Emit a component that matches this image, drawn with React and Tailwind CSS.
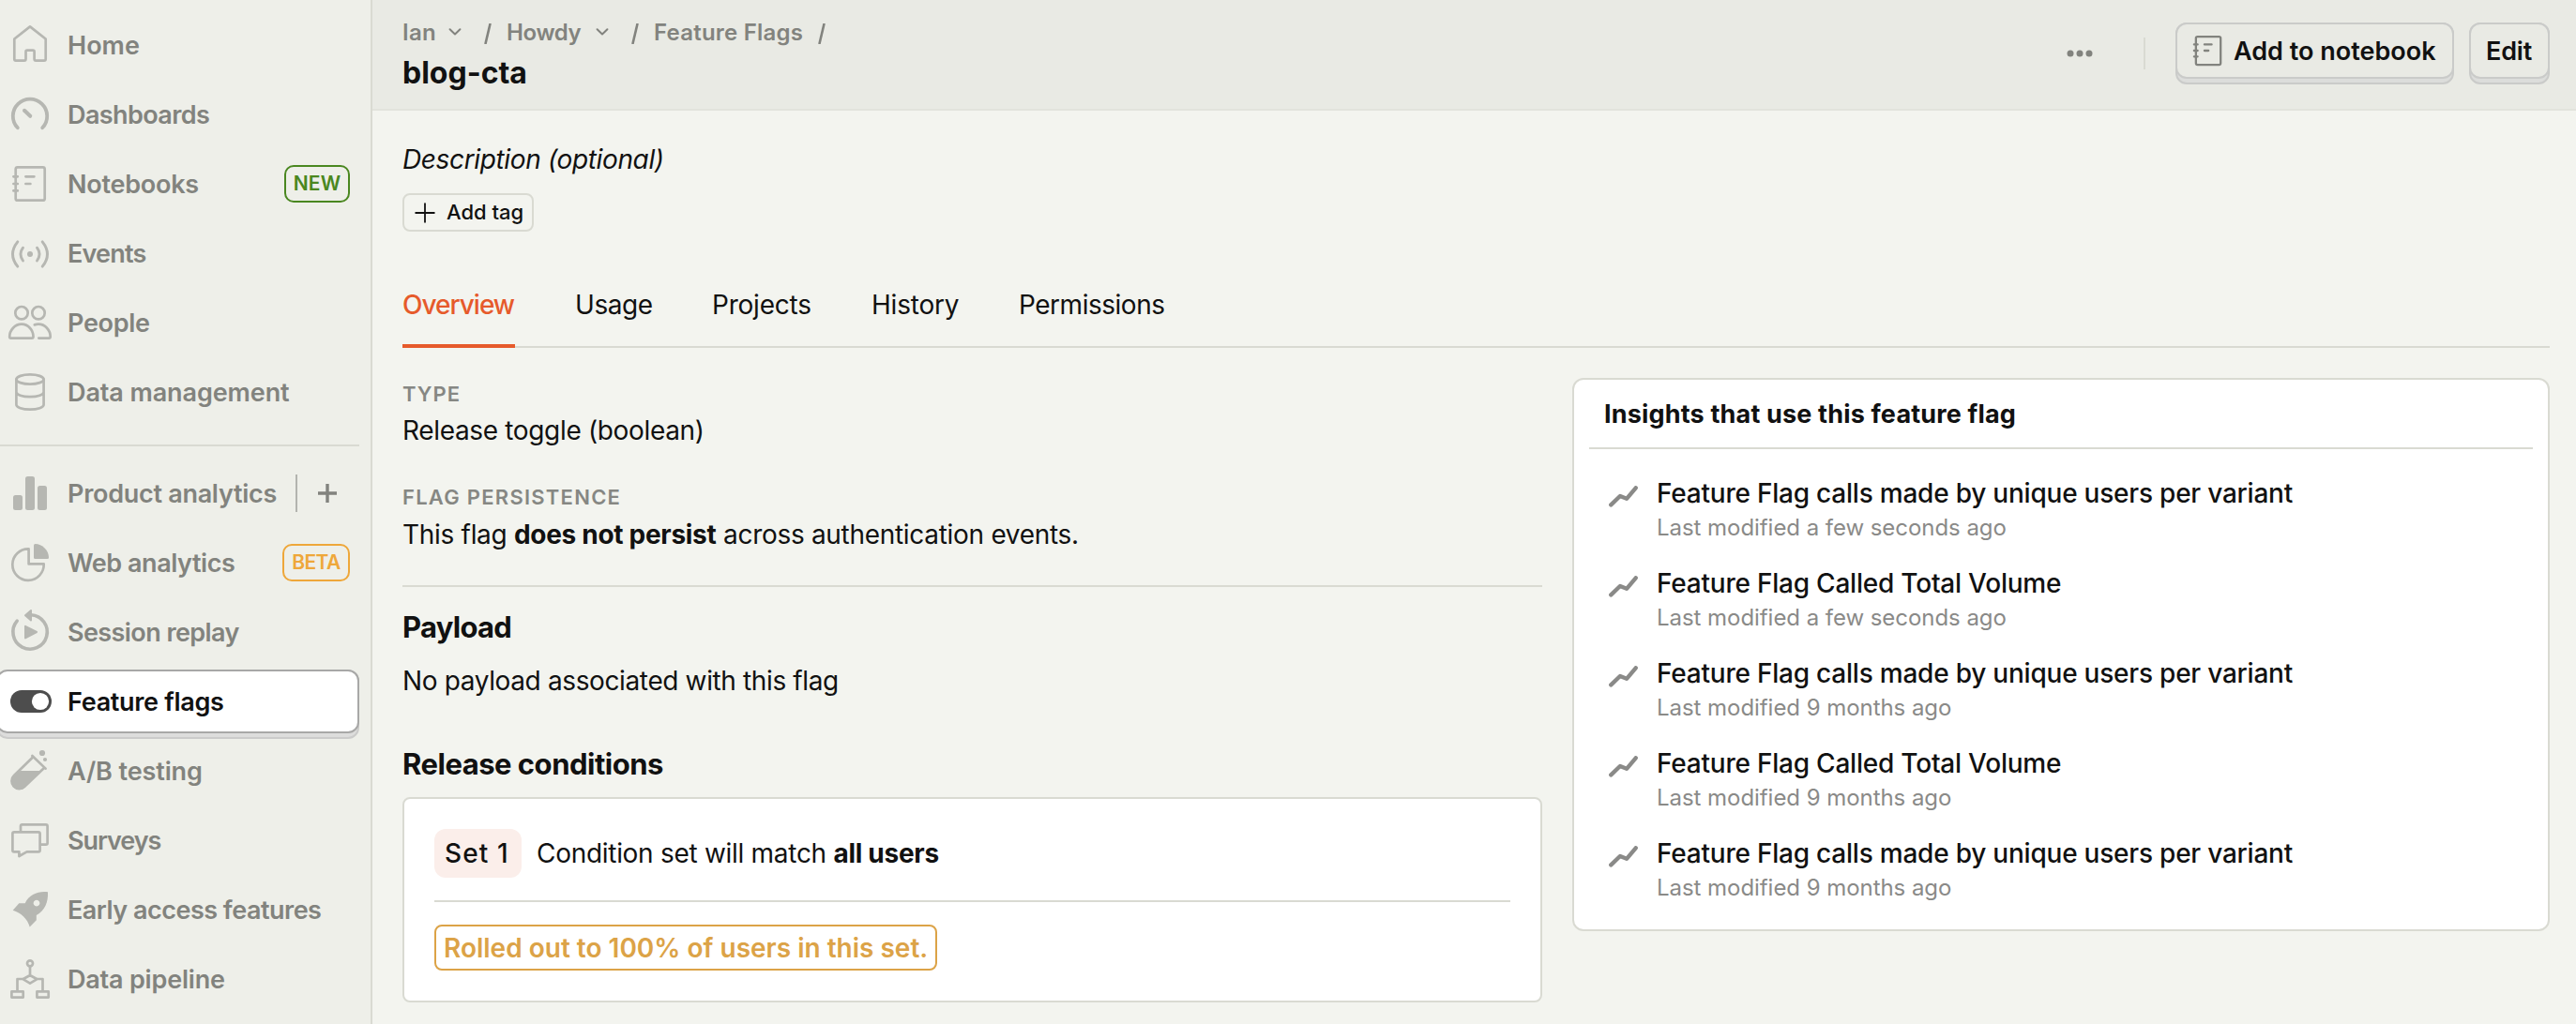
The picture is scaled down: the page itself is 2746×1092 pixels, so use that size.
const line = {
  fill: 'none',
  stroke: 'currentColor',
  strokeWidth: 2.7,
  strokeLinecap: 'round',
  strokeLinejoin: 'round',
}

const icons = {
  home: (
    <path
      {...line}
      d="M32 14.4 L48.7 27.5 V49 q0 1.7-1.7 1.7 H38.3 q-1.7 0-1.7-1.7 V41.2 q0-1.5-1.5-1.5 H29 q-1.5 0-1.5 1.5 V49 q0 1.7-1.7 1.7 H17 q-1.7 0-1.7-1.7 V27.5 Z"
    />
  ),
  dashboards: (
    <g {...line}>
      <path strokeWidth="3.8" d="M18.8 48.3 A18.2 18.2 0 1 1 45.2 48.3" />
      <path strokeWidth="4" d="M26 29.8 L32.2 35.8" />
    </g>
  ),
  notebook: (
    <g {...line}>
      <rect x="16.7" y="16.4" width="31" height="35.3" rx="2" />
      <path d="M14.4 26.3 H18.8 M14.4 34 H18.8 M14.4 41.4 H18.8 M27.4 26.3 H36.4 M27.4 34 H32.4" />
    </g>
  ),
  events: (
    <g {...line} strokeWidth="2.9">
      <path d="M18.8 21.8 Q8.2 35 18.8 48.2 M45.2 21.8 Q55.8 35 45.2 48.2 M24.5 28.2 Q19.4 35 24.5 42 M39.5 28.2 Q44.6 35 39.5 42" />
      <circle cx="32" cy="35" r="3" fill="currentColor" stroke="none" />
    </g>
  ),
  people: (
    <g {...line}>
      <circle cx="23" cy="23.7" r="6.7" />
      <circle cx="41" cy="23.7" r="6.7" />
      <path d="M11.5 50.6 H34 q1.5 0 1.5-1.5 C35.5 42 30 35.7 23 35.7 S10.2 42 10.2 49.1 q0 1.5 1.3 1.5 Z" />
      <path d="M36.8 36.4 C38 36 39.5 35.7 41 35.7 C48 35.7 53.7 42 53.7 49.1 q0 1.5-1.5 1.5 H41.3" />
    </g>
  ),
  database: (
    <g {...line}>
      <ellipse cx="32" cy="20.5" rx="14.6" ry="5.1" />
      <path d="M17.4 20.5 V47.5 c0 3 6.5 5.1 14.6 5.1 s14.6-2.1 14.6-5.1 V20.5 M17.4 34 c0 3 6.5 5.1 14.6 5.1 s14.6-2.1 14.6-5.1" />
    </g>
  ),
  bars: (
    <g fill="currentColor">
      <rect x="14" y="36" width="10" height="16" rx="2.5" />
      <rect x="27" y="16" width="10" height="36" rx="2.5" />
      <rect x="40" y="26" width="10" height="26" rx="2.5" />
    </g>
  ),
  pie: (
    <g>
      <path {...line} d="M30.6 19.4 V35.4 H46.7 A16.7 16.7 0 1 1 30.6 19.4 Z" />
      <path
        fill="currentColor"
        d="M37.5 14 C45 14 52 21 52 28.5 q0 1.5-1.5 1.5 H37.5 q-1.5 0-1.5-1.5 V15.5 q0-1.5 1.5-1.5 Z"
      />
    </g>
  ),
  replay: (
    <g>
      <path {...line} strokeWidth="3.6" d="M33 15.8 A18.2 18.2 0 1 1 18.2 22.2" />
      <path {...line} strokeWidth="2" fill="currentColor" d="M27 16.2 L33 11 V21.4 Z" />
      <path {...line} strokeWidth="2" fill="currentColor" d="M27 27.8 L39 34 L27 40.4 Z" />
    </g>
  ),
  toggle: (
    <g>
      <rect x="11" y="22" width="44" height="24" rx="12" fill="#4d4d4d" />
      <circle cx="43" cy="34" r="9.1" fill="#fff" />
    </g>
  ),
  flask: (
    <g>
      <path
        {...line}
        strokeLinecap="butt"
        d="M35.5 19 L15 39 A7.4 7.4 0 0 0 26.2 50.8 L47 31"
      />
      <path {...line} d="M34.4 18 L48.6 31.6" />
      <path fill="currentColor" d="M21.5 34 H43.5 L27 51.4 A8.7 8.7 0 0 1 14.4 39.4 Z" />
      <circle cx="45" cy="15" r="3.1" fill="currentColor" />
      <circle cx="48" cy="22" r="2.1" fill="currentColor" />
    </g>
  ),
  surveys: (
    <path
      {...line}
      d="M15 25.4 H41 q1.6 0 1.6 1.6 V44.8 q0 1.6-1.6 1.6 H28.6 L20.4 51 V46.4 H15 q-1.6 0-1.6-1.6 V27 q0-1.6 1.6-1.6 Z M22 24.5 V19 q0-1.6 1.6-1.6 H49 q1.6 0 1.6 1.6 V37 q0 1.6-1.6 1.6 H43.5"
    />
  ),
  rocket: (
    <path
      fill="currentColor"
      fillRule="evenodd"
      d="M51 15.2 C41 14 31 17.5 26.7 27.3 H20.3 L13.7 34.7 C22.5 37.5 29.5 44 31.7 52.4 L38.8 45.3 V40 C48 35 51.5 26 51 15.2 Z M39 23.7 a3.4 3.4 0 1 0 0.01 0 Z"
    />
  ),
  pipeline: (
    <g {...line}>
      <circle cx="32" cy="17.3" r="3" />
      <path d="M32 21 V29.5 M32 30 L39.5 34.2 L32 38.6 L24.5 34.2 Z M24 34 H18.5 V46.5 M40 34 H45.5 V46.5" />
      <path d="M12.4 47.4 H24.7 V53.6 H12.4 Z M39.4 47.4 H51.7 V53.6 H39.4 Z" />
    </g>
  ),
}

const primary = [
  { icon: 'home', label: 'Home', tracking: '' },
  { icon: 'dashboards', label: 'Dashboards', tracking: 'tracking-[-0.6px]' },
  { icon: 'notebook', label: 'Notebooks', tracking: 'tracking-[-0.25px]', badge: 'NEW' },
  { icon: 'events', label: 'Events', tracking: 'tracking-[-0.8px]' },
  { icon: 'people', label: 'People', tracking: 'tracking-[-0.3px]' },
  { icon: 'database', label: 'Data management', tracking: 'tracking-[-0.1px]' },
]

const products = [
  { icon: 'bars', label: 'Product analytics', tracking: 'tracking-[-0.28px]', add: true },
  { icon: 'pie', label: 'Web analytics', tracking: 'tracking-[-0.44px]', badge: 'BETA' },
  { icon: 'replay', label: 'Session replay', tracking: 'tracking-[-0.58px]' },
  { icon: 'toggle', label: 'Feature flags', tracking: 'tracking-[-0.3px]', active: true },
  { icon: 'flask', label: 'A/B testing', tracking: 'tracking-[-0.1px]' },
  { icon: 'surveys', label: 'Surveys', tracking: 'tracking-[-1.07px]' },
  { icon: 'rocket', label: 'Early access features', tracking: 'tracking-[-0.5px]' },
  { icon: 'pipeline', label: 'Data pipeline', tracking: 'tracking-[-0.2px]' },
]

function NavIcon({ name }) {
  return (
    <svg width="64" height="68" viewBox="0 0 64 68" className="shrink-0 text-[#b6b7b2]">
      {icons[name]}
    </svg>
  )
}

function Badge({ kind }) {
  return kind === 'NEW' ? (
    <span className="mr-[10px] flex h-10 w-[70px] items-center justify-center rounded-[10px] border-2 border-[#4a8720] text-[21px] font-semibold tracking-[0.1px] text-[#4a8720]">
      NEW
    </span>
  ) : (
    <span className="mr-[10px] flex h-10 w-[72px] items-center justify-center rounded-[10px] border-2 border-[#eea73a] text-[21px] font-semibold tracking-[-0.6px] text-[#eea73a]">
      BETA
    </span>
  )
}

function NavItem({ item }) {
  if (item.active) {
    return (
      <a className="relative z-10 -mb-[6px] -ml-1 flex h-[74px] rounded-xl border-2 border-[#cbcbca] bg-[#dddddc]">
        <span className="-mx-[2px] -mt-[2px] flex h-[68px] flex-1 items-center rounded-xl border-2 border-[#a8a8a7] bg-white pl-[2px]">
          <NavIcon name={item.icon} />
          <span className={`pl-2 pt-[2px] text-[#111] ${item.tracking}`}>{item.label}</span>
        </span>
      </a>
    )
  }
  return (
    <a className="flex h-[68px] items-center">
      <NavIcon name={item.icon} />
      <span className={`flex-1 whitespace-nowrap pl-2 pt-[2px] ${item.tracking}`}>{item.label}</span>
      {item.badge && <Badge kind={item.badge} />}
      {item.add && (
        <span className="mr-6 flex items-center gap-[22px]">
          <span className="h-10 w-[2px] bg-[#b3b4af]" />
          <svg width="20" height="20" viewBox="0 0 20 20" stroke="currentColor" strokeWidth="3.4">
            <path d="M10 0 V20 M0 10 H20" />
          </svg>
        </span>
      )}
    </a>
  )
}

function Sidebar() {
  return (
    <nav className="flex w-[397px] shrink-0 flex-col border-r-2 border-[#d9dad2] bg-[#eeefe9] pr-3 pt-[14px] text-[27px] font-semibold text-[#82837e]">
      <div className="flex flex-col gap-[6px]">
        {primary.map((item) => (
          <NavItem key={item.label} item={item} />
        ))}
      </div>
      <div className="mb-4 mt-[22px] h-[2px] shrink-0 bg-[#d9dad2]" />
      <div className="flex flex-col gap-[6px]">
        {products.map((item) => (
          <NavItem key={item.label} item={item} />
        ))}
      </div>
    </nav>
  )
}

function Chevron({ className }) {
  return (
    <svg width="14" height="8" viewBox="0 0 14 8" className={className} fill="none" stroke="currentColor" strokeWidth="2" strokeLinecap="round" strokeLinejoin="round">
      <path d="M1.6 1.3 L7 6.5 L12.4 1.3" />
    </svg>
  )
}

function Slash({ className }) {
  return (
    <svg width="8" height="22" viewBox="0 0 8 22" className={className} fill="none" stroke="currentColor" strokeWidth="2.6">
      <path d="M6.6 0 L1.4 22" />
    </svg>
  )
}

function RaisedButton({ className, children }) {
  return (
    <button className={`h-[66px] rounded-xl border-2 border-[#cacbc9] bg-[#dcdddb] ${className}`}>
      <span className="-mx-[2px] -mt-[6px] flex h-[60px] items-center rounded-xl border-2 border-[#cacbc9] bg-[#e9eae4] text-[27px] font-semibold text-[#111]">
        {children}
      </span>
    </button>
  )
}

function Header() {
  return (
    <header className="flex h-[118px] shrink-0 items-start justify-between border-b-2 border-[#e2e3dc] bg-[#e9eae4] pl-8 pr-7">
      <div className="pt-[18px]">
        <div className="flex h-8 items-center text-[24px] font-semibold leading-8 text-[#82837e]">
          <span className="w-[35px] pt-[2px] tracking-[0.3px]">Ian</span>
          <Chevron className="ml-[14px]" />
          <Slash className="ml-6 mt-1" />
          <span className="ml-4 w-[81px] pt-[2px] tracking-[-0.38px]">Howdy</span>
          <Chevron className="ml-[14px]" />
          <Slash className="ml-6 mt-1" />
          <span className="ml-4 w-[160px] whitespace-nowrap pt-[2px] tracking-[0.22px]">Feature Flags</span>
          <Slash className="ml-[15px] mt-1" />
        </div>
        <h1 className="mt-2 text-[32px] font-bold leading-10 text-[#111]">blog-cta</h1>
      </div>
      <div className="flex pt-6">
        <svg width="28" height="8" viewBox="0 0 28 8" className="mt-[29px] text-[#82837e]" fill="currentColor">
          <circle cx="4" cy="4" r="3.5" />
          <circle cx="14" cy="4" r="3.5" />
          <circle cx="24" cy="4" r="3.5" />
        </svg>
        <span className="ml-[54px] mr-8 mt-4 h-[34px] w-[2px] bg-[#d9dad2]" />
        <RaisedButton className="mr-4 w-[297px]">
          <svg width="36" height="40" viewBox="13 14 36 40" className="ml-[14px] shrink-0 text-[#82837e]">
            <g transform="translate(31 34) scale(0.85) translate(-31 -34)">{icons.notebook}</g>
          </svg>
          <span className="ml-[10px] whitespace-nowrap pt-[2px]">Add to notebook</span>
        </RaisedButton>
        <RaisedButton className="w-[86px]">
          <span className="pl-4 pt-[2px] tracking-[-0.2px]">Edit</span>
        </RaisedButton>
      </div>
    </header>
  )
}

function Tabs() {
  return (
    <div className="mt-[58px] flex h-[66px] items-start gap-16 border-b-2 border-[#d9dad2] text-[28px] leading-10">
      <span className="h-[66px] w-[120px] border-b-4 border-[#e65a2b] font-medium tracking-[-1px] text-[#e65a2b]">
        Overview
      </span>
      <span className="w-[83px] tracking-[-0.43px]">Usage</span>
      <span className="-ml-[1px] w-[106px] tracking-[-0.21px]">Projects</span>
      <span className="w-[93px] tracking-[-0.22px]">History</span>
      <span className="tracking-[-0.48px]">Permissions</span>
    </div>
  )
}

function Details() {
  return (
    <div className="flex w-[1215px] shrink-0 flex-col pt-[1px] text-[28px] leading-10">
      <div className="text-[22px] font-semibold leading-8 tracking-[1px] text-[#868783]">TYPE</div>
      <div className="mt-[3px] tracking-[-0.34px]">Release toggle (boolean)</div>
      <div className="mt-[35px] text-[22px] font-semibold leading-8 tracking-[1.25px] text-[#868783]">
        FLAG PERSISTENCE
      </div>
      <div className="mt-1 tracking-[-0.3px]">
        This flag <b>does not persist</b> across authentication events.
      </div>
      <div className="mt-[34px] h-[2px] bg-[#d9dad2]" />
      <h2 className="mt-[23px] text-[31px] font-bold tracking-[-0.72px]">Payload</h2>
      <div className="mt-[17px] tracking-[-0.37px]">No payload associated with this flag</div>
      <h2 className="mt-[49px] text-[31px] font-bold tracking-[-0.49px]">Release conditions</h2>
      <div className="mt-[15px] rounded-lg border-2 border-[#d9dad2] bg-white p-8">
        <div className="flex h-[52px] items-center gap-4">
          <span className="flex h-[52px] w-[93px] items-center rounded-xl bg-[#fbeeea] pl-[11px] font-medium tracking-[1.1px]">
            Set 1
          </span>
          <span className="tracking-[-0.29px]">
            Condition set will match <b>all users</b>
          </span>
        </div>
        <div className="mt-6 h-[2px] bg-[#d9dad2]" />
        <div className="mt-6 flex h-[49px] w-[536px] items-center whitespace-nowrap rounded-lg border-2 border-[#dca347] pl-2 font-semibold text-[#dca347]">
          Rolled out to 100% of users in this set.
        </div>
      </div>
    </div>
  )
}

const CALLS = 'Feature Flag calls made by unique users per variant'
const VOLUME = 'Feature Flag Called Total Volume'

const insights = [
  { title: CALLS, when: 'a few seconds ago' },
  { title: VOLUME, when: 'a few seconds ago' },
  { title: CALLS, when: '9 months ago' },
  { title: VOLUME, when: '9 months ago' },
  { title: CALLS, when: '9 months ago' },
]

function Insights() {
  return (
    <section className="h-[590px] flex-1 rounded-xl border-2 border-[#d9dad2] bg-white p-4">
      <h3 className="pl-4 pt-[1px] text-[27px] font-bold leading-10 tracking-[0.17px]">
        Insights that use this feature flag
      </h3>
      <div className="mt-[15px] h-[2px] bg-[#d9dad2]" />
      <ul className="mt-[27px] flex flex-col gap-[22px]">
        {insights.map((item, i) => (
          <li key={i} className="flex pl-[21px]">
            <svg width="31" height="23" viewBox="0 0 31 23" className="mt-3 shrink-0" fill="none" stroke="#8a8a88" strokeWidth="4.4" strokeLinecap="round" strokeLinejoin="round">
              <path d="M2.3 20.4 L12 11 L19 13.8 L28.7 2.3" />
            </svg>
            <div className="ml-5">
              <div className="text-[28px] font-medium leading-10 tracking-[-0.22px]">{item.title}</div>
              <div className="text-[24px] leading-[34px] tracking-[-0.05px] text-[#8a8a88]">
                Last modified {item.when}
              </div>
            </div>
          </li>
        ))}
      </ul>
    </section>
  )
}

export default function App() {
  return (
    <div className="flex h-[1092px] w-[2746px] overflow-hidden bg-[#f3f4ef] font-['Inter',sans-serif] text-[#111]">
      <Sidebar />
      <div className="flex flex-1 flex-col">
        <Header />
        <main className="flex flex-1 flex-col pl-8 pr-7 pt-8">
          <div className="text-[28px] italic leading-10 tracking-[-0.36px]">Description (optional)</div>
          <button className="mt-4 flex h-[41px] w-[140px] shrink-0 items-center rounded-lg border-2 border-[#d9dad2] text-[22px] font-medium">
            <svg width="22" height="22" viewBox="0 0 22 22" className="ml-[11px] mr-[12px]" fill="none" stroke="currentColor" strokeWidth="1.8">
              <path d="M11 0.5 V21.5 M0.5 11 H21.5" />
            </svg>
            Add tag
          </button>
          <Tabs />
          <div className="mt-8 flex items-start gap-8">
            <Details />
            <Insights />
          </div>
        </main>
      </div>
    </div>
  )
}
